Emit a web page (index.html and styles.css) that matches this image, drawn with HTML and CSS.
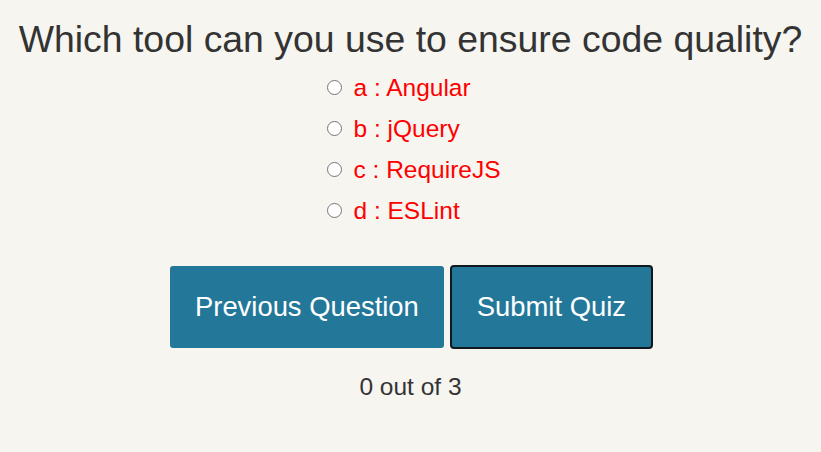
FILE: index.html
```html
<!DOCTYPE html>
<html lang="en">
<head>
<meta charset="utf-8">
<title>Quiz</title>
<link rel="stylesheet" href="styles.css">
</head>
<body>
<main class="quiz">
  <h1 class="question">Which tool can you use to ensure code quality?</h1>
  <div class="options">
    <label class="option"><input type="radio" name="answer" class="radio"><span>a : Angular</span></label>
    <label class="option"><input type="radio" name="answer" class="radio"><span>b : jQuery</span></label>
    <label class="option"><input type="radio" name="answer" class="radio"><span>c : RequireJS</span></label>
    <label class="option"><input type="radio" name="answer" class="radio"><span>d : ESLint</span></label>
  </div>
  <div class="actions">
    <button class="btn" type="button">Previous Question</button>
    <button class="btn btn-focused" type="button">Submit Quiz</button>
  </div>
  <p class="score">0 out of 3</p>
</main>
</body>
</html>
```

FILE: styles.css
```css
html, body {
  margin: 0;
  padding: 0;
  background: #f6f5f0;
}
body {
  font-family: "Liberation Sans", Arial, sans-serif;
  color: #333;
}
.quiz {
  display: flex;
  flex-direction: column;
  align-items: center;
  padding-top: 18px;
}
.question {
  margin: 0;
  font-size: 37.4px;
  font-weight: normal;
  line-height: 43px;
  color: #333;
}
.options {
  display: flex;
  flex-direction: column;
  margin-top: 6px;
  padding-left: 7px;
}
.option {
  display: flex;
  align-items: center;
  height: 41px;
  font-size: 24.5px;
  color: #f00;
}
.radio {
  appearance: none;
  -webkit-appearance: none;
  margin: 0 11px 0 0;
  width: 15px;
  height: 15px;
  border: 1px solid #767676;
  border-radius: 50%;
  background: #fff;
  box-sizing: border-box;
}
.actions {
  display: flex;
  gap: 7px;
  margin-top: 35px;
}
.btn {
  font-family: "Liberation Sans", Arial, sans-serif;
  font-size: 27.4px;
  color: #fff;
  background: #23789a;
  border: none;
  border-radius: 3px;
  height: 82px;
  padding: 0 25.5px;
}
.btn-focused {
  outline: 2px solid #101820;
  outline-offset: -1px;
}
.score {
  margin: 25px 0 0;
  font-size: 24.5px;
  line-height: 28px;
  color: #333;
}
```
